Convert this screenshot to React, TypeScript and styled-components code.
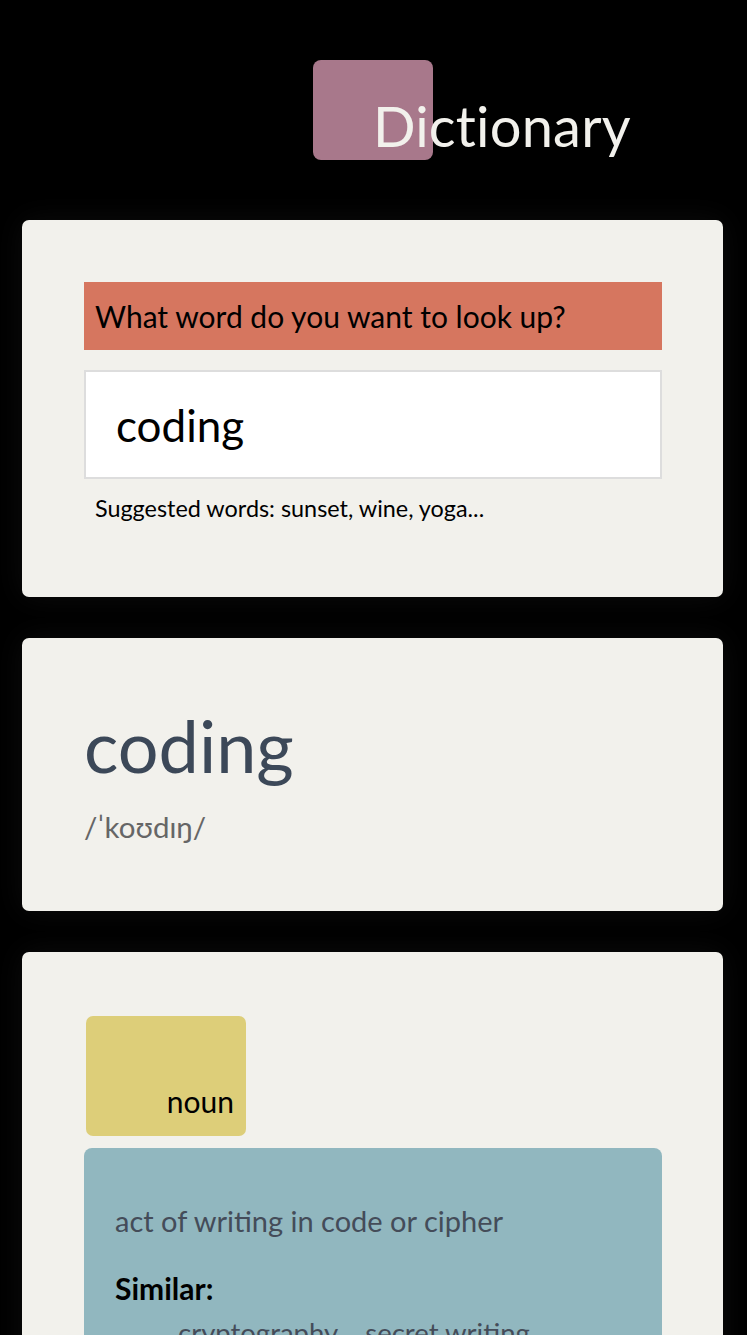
import React from "react";
import styled, { createGlobalStyle } from "styled-components";

const Global = createGlobalStyle`
  html, body {
    margin: 0;
    padding: 0;
    background: #000;
  }
  body {
    font-family: Lato, "Open Sans", sans-serif;
  }
  * { box-sizing: border-box; }
`;

const Page = styled.div`
  width: 701px;
  margin: 0 22px;
  padding-bottom: 60px;
`;

const Header = styled.header`
  display: flex;
  align-items: flex-start;
  padding: 60px 0 0 291px;
  height: 220px;
`;

const Badge = styled.div`
  width: 120px;
  height: 100px;
  border-radius: 8px;
  background: #a8788b;
  flex: none;
`;

const Title = styled.h1`
  position: relative;
  margin: 38px 0 0 -60px;
  font-size: 56px;
  line-height: 56px;
  font-weight: 400;
  color: #f2f1ec;
  letter-spacing: 0.2px;
`;

const Card = styled.section`
  background: #f2f1ec;
  border-radius: 7px;
  padding: 62px 61px 62px 62px;
  box-shadow: 0 0 30px rgba(255, 255, 255, 0.05);
  & + & {
    margin-top: 41px;
  }
`;

const Label = styled.label`
  display: block;
  height: 68px;
  line-height: 68px;
  padding-left: 11px;
  background: #d6765f;
  color: #000;
  font-size: 30px;
`;

const Field = styled.input`
  display: block;
  width: 100%;
  height: 109px;
  margin-top: 20px;
  padding: 0 0 0 30px;
  border: 2px solid #dddddd;
  background: #fff;
  color: #000;
  font-family: Lato, "Open Sans", sans-serif;
  font-size: 44px;
  outline: none;
`;

const Hint = styled.p`
  margin: 15px 0 13px;
  padding-left: 11px;
  font-size: 23.4px;
  line-height: 28px;
  color: #000;
`;

const Word = styled.h2`
  margin: 2px 0 0;
  font-size: 72px;
  font-weight: 400;
  color: #3c4858;
`;

const Phonetic = styled.p`
  margin: 22px 0 5px;
  font-size: 29.5px;
  line-height: 34px;
  color: #666;
`;

const Pos = styled.div`
  width: 160px;
  height: 120px;
  margin: 2px 0 0 2px;
  border-radius: 7px;
  background: #ddce79;
  display: flex;
  align-items: flex-end;
  justify-content: flex-end;
  padding: 0 12px 17px 0;
  font-size: 30px;
  line-height: 36px;
  color: #000;
`;

const Meaning = styled.div`
  margin-top: 12px;
  border-radius: 8px;
  background: #91b7bf;
  padding: 55px 31px 40px;
`;

const Definition = styled.p`
  margin: 0;
  font-size: 29px;
  color: #444c59;
`;

const SimilarTitle = styled.h3`
  margin: 32px 0 0;
  font-size: 30px;
  font-weight: 700;
  color: #000;
`;

const Synonyms = styled.ul`
  display: flex;
  flex-wrap: wrap;
  gap: 27px;
  list-style: none;
  margin: 10px 0 0;
  padding: 0 0 0 63px;
`;

const Synonym = styled.li`
  font-size: 27.5px;
  color: #444c59;
`;

export default function App() {
  return (
    <>
      <Global />
      <Page>
        <Header>
          <Badge />
          <Title>Dictionary</Title>
        </Header>
        <Card>
          <Label htmlFor="word">What word do you want to look up?</Label>
          <Field id="word" type="search" defaultValue="coding" />
          <Hint>Suggested words: sunset, wine, yoga...</Hint>
        </Card>
        <Card>
          <Word>coding</Word>
          <Phonetic>/ˈkoʊdɪŋ/</Phonetic>
        </Card>
        <Card>
          <Pos>noun</Pos>
          <Meaning>
            <Definition>act of writing in code or cipher</Definition>
            <SimilarTitle>Similar:</SimilarTitle>
            <Synonyms>
              <Synonym>cryptography</Synonym>
              <Synonym>secret writing</Synonym>
            </Synonyms>
          </Meaning>
        </Card>
      </Page>
    </>
  );
}
